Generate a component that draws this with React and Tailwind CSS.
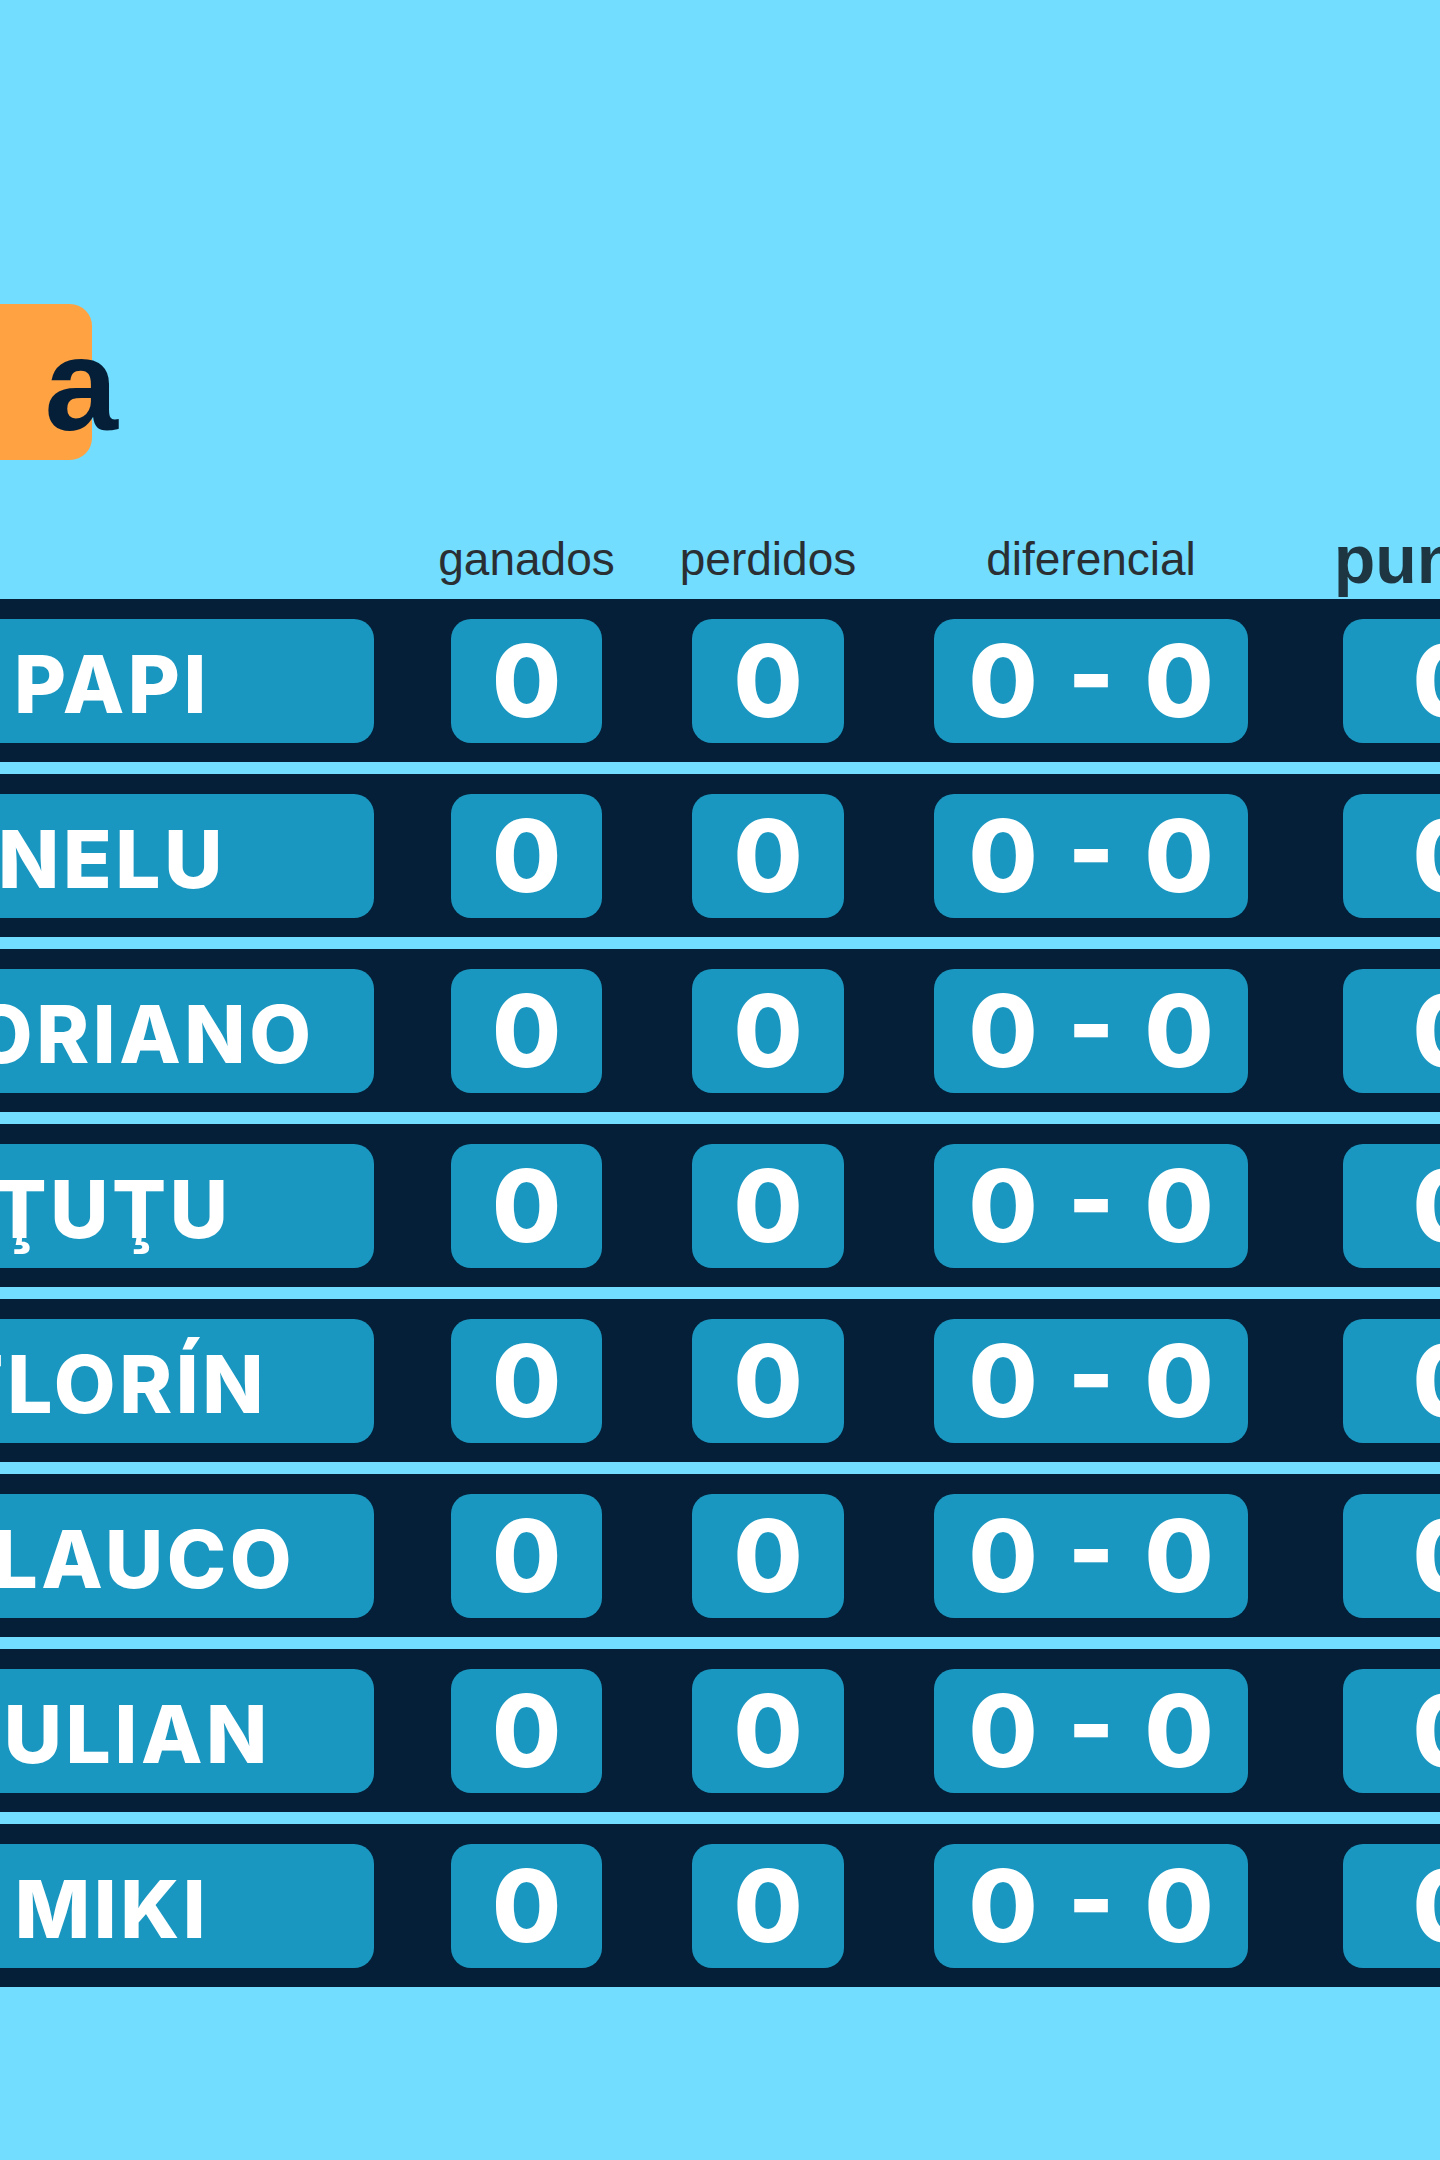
import React from "react";

const names = ["PAPI", "NELU", "DORIANO", "ŢUŢU", "FLORÍN", "GLAUCO", "JULIAN", "MIKI"];

function Box({ w, children, extra = "" }) {
  return (
    <div
      className={`flex h-[124px] shrink-0 items-center justify-center rounded-[20px] bg-[#1a97c0] text-white ${w} ${extra}`}
    >
      {children}
    </div>
  );
}

export default function App() {
  return (
    <div className="relative min-h-[2160px] w-full overflow-hidden bg-[#72ddff]">
      <div className="ml-[-150px] w-[1800px]">
        {/* Title */}
        <div className="relative mt-[304px] h-[156px]">
          <div className="absolute left-0 top-0 h-[156px] w-[242px] rounded-[22px] bg-[#ffa242]" />
          <div className="relative z-10 flex w-[268px] justify-end pt-[15px]">
            <h1
              className="flex items-baseline gap-[70px] whitespace-nowrap text-[132px] font-bold leading-none text-[#061f38]"
              style={{ fontFamily: '"Liberation Sans", Arial, sans-serif' }}
            >
              <span>Bienvenidos</span>
              <span>a</span>
            </h1>
          </div>
        </div>

        {/* Header */}
        <div
          className="flex h-[139px] items-end text-[#2a2f34]"
          style={{ fontFamily: '"Liberation Sans", Arial, sans-serif' }}
        >
          <div className="w-[524px] shrink-0" />
          <div className="ml-[77px] mb-[17px] flex w-[151px] shrink-0 justify-center whitespace-nowrap text-[46px] leading-none">
            ganados
          </div>
          <div className="ml-[90px] mb-[17px] flex w-[152px] shrink-0 justify-center whitespace-nowrap text-[46px] leading-none">
            perdidos
          </div>
          <div className="ml-[90px] mb-[17px] flex w-[314px] shrink-0 justify-center whitespace-nowrap text-[46px] leading-none">
            diferencial
          </div>
          <div className="ml-[95px] mb-[6px] flex w-[208px] shrink-0 justify-center whitespace-nowrap text-[68px] font-bold leading-none text-[#1e3641]">
            puntos
          </div>
        </div>

        {/* Rows */}
        <div
          className="flex flex-col gap-[12px]"
          style={{ fontFamily: 'Inter, "Liberation Sans", sans-serif' }}
        >
          {names.map((n) => (
            <div key={n} className="flex h-[163px] items-center bg-[#061f38]">
              <Box w="w-[524px]" extra="pt-[7px]">
                <span className="whitespace-nowrap text-[80px] font-extrabold leading-none tracking-[0.045em]">
                  {n}
                </span>
              </Box>
              <Box w="w-[151px]" extra="ml-[77px]">
                <span className="text-[100px] font-extrabold leading-none">0</span>
              </Box>
              <Box w="w-[152px]" extra="ml-[90px]">
                <span className="text-[100px] font-extrabold leading-none">0</span>
              </Box>
              <Box w="w-[314px]" extra="ml-[90px]">
                <span className="whitespace-pre text-[100px] font-extrabold leading-none [word-spacing:8px]">
                  0 - 0
                </span>
              </Box>
              <Box w="w-[208px]" extra="ml-[95px]">
                <span className="text-[100px] font-extrabold leading-none">0</span>
              </Box>
            </div>
          ))}
        </div>
      </div>
    </div>
  );
}
